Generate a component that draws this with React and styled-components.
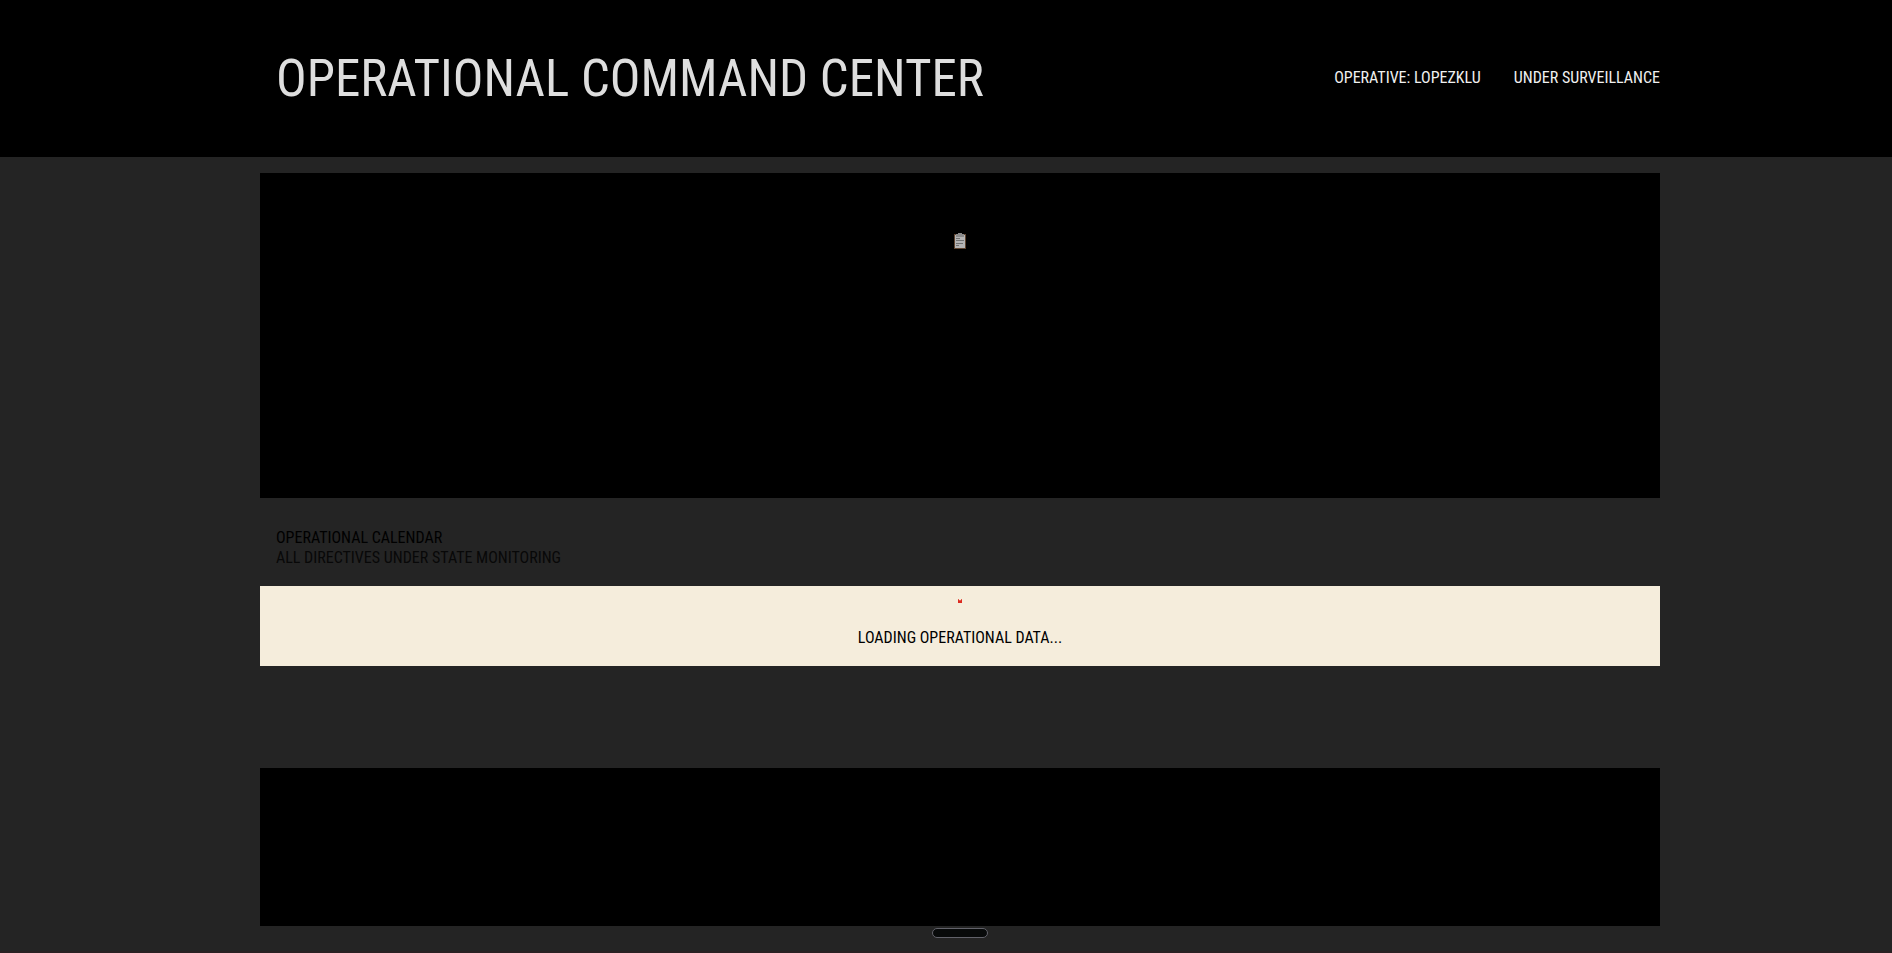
import React from "react";
import styled, { createGlobalStyle } from "styled-components";

const GlobalStyle = createGlobalStyle`
  * { box-sizing: border-box; }
  body {
    margin: 0;
    background: #242424;
    color: #000;
    font: 400 16px/20px "Roboto Condensed", "Liberation Sans Narrow", Roboto, sans-serif;
    text-transform: uppercase;
  }
  h1, h2, p { margin: 0; font-weight: 400; }
`;

const Page = styled.div`
  min-height: 100vh;
  border-bottom: 2px solid #2a2022;
`;

const Header = styled.header`
  background: #000;
  padding: 48px 0 49px 28px;
`;

const Container = styled.div`
  width: 100%;
  max-width: 1400px;
  margin: 0 auto;
`;

const HeaderRow = styled(Container)`
  display: flex;
  align-items: center;
  justify-content: space-between;
  padding-left: 16px;
`;

const Title = styled.h1`
  padding-top: 2px;
  color: #dedede;
  font-size: 51px;
  line-height: 58px;
`;

const Status = styled.div`
  display: flex;
  gap: 33px;
  color: #f0f0f0;
`;

const Main = styled.main`
  padding: 16px 0 0 28px;
`;

const Panel = styled.section`
  display: flex;
  justify-content: center;
  background: #000;
  height: ${(p) => p.$height}px;
  padding-top: 58px;
`;

const Intro = styled.div`
  padding: 30px 16px 18px;
`;

const Heading = styled.h2`
  font-size: 16px;
`;

const Subtitle = styled.p`
  color: #080808;
`;

const Loading = styled.section`
  display: flex;
  flex-direction: column;
  align-items: center;
  gap: 25px;
  height: 80px;
  margin-bottom: 102px;
  padding-top: 13px;
  background: #f5eddc;
`;

const Pill = styled.button`
  display: block;
  width: 56px;
  height: 10px;
  margin: 2px auto 0;
  padding: 0;
  background: #080a0a;
  border: 1px solid #62626a;
  border-radius: 5px;
`;

const Clipboard = () => (
  <svg width="16" height="20" viewBox="0 0 16 20" aria-hidden="true">
    <path d="M2 3h12v15H2z" fill="#5d432e" />
    <path d="M3 4h10v13H3z" fill="#b4b4b4" />
    <path d="M4 3h8v3H4zM6 2h4v2H6z" fill="#8a8a8a" />
    <path d="M4 7.500h4M4 9.500h8M4 12.500h7M4 14.500h3" stroke="#707070" strokeWidth="1" />
  </svg>
);

const Marker = () => (
  <svg width="4" height="4" viewBox="0 0 4 4" aria-hidden="true">
    <path d="M0 0h1v1h2V0h1v4H0z" fill="#dc2a20" />
    <path d="M0 0h1v1H0zM3 0h1v1H3zM1 1h2v1H1z" fill="#e88878" fillOpacity="0.5" />
  </svg>
);

export default function App() {
  return (
    <Page>
      <GlobalStyle />
      <Header>
        <HeaderRow>
          <Title>Operational Command Center</Title>
          <Status>
            <span>Operative: Lopezklu</span>
            <span>Under Surveillance</span>
          </Status>
        </HeaderRow>
      </Header>
      <Main>
        <Container>
          <Panel $height={325}>
            <Clipboard />
          </Panel>
          <Intro>
            <Heading>Operational Calendar</Heading>
            <Subtitle>All directives under state monitoring</Subtitle>
          </Intro>
          <Loading>
            <Marker />
            <p>Loading operational data...</p>
          </Loading>
          <Panel $height={158} />
          <Pill type="button" aria-label="Toggle panel" />
        </Container>
      </Main>
    </Page>
  );
}
